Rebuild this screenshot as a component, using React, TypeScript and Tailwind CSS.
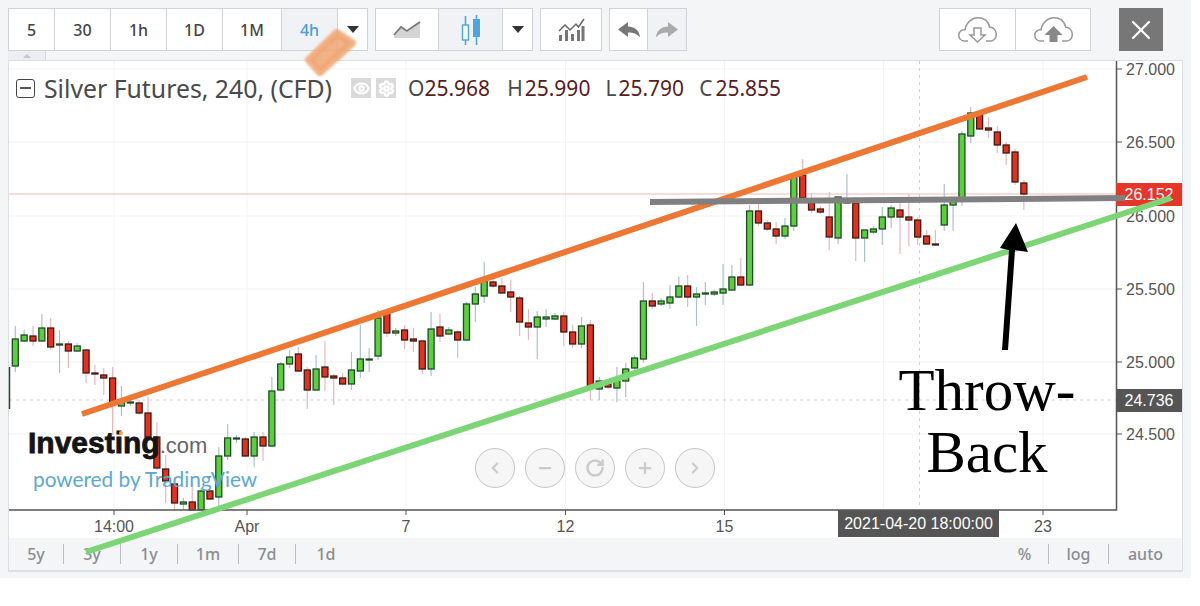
import React from "react";
import { ChevronLeft, ChevronRight, Minus, Plus, RotateCw, Eye, Settings, X } from "lucide-react";

type C = [number, number, number, number, "g" | "r"];
const candles: C[] = [
  [326, 339, 366, 372, "g"], [330, 335, 341, 342, "g"], [326, 336, 341, 346, "r"], [314, 328, 341, 342, "g"], [318, 328, 347, 350, "r"],
  [330, 344, 345, 373, "g"], [341, 344, 351, 368, "r"], [343, 346, 351, 352, "g"], [349, 350, 373, 383, "r"], [365, 373, 374, 385, "r"],
  [368, 375, 378, 395, "r"], [367, 378, 402, 435, "r"], [386, 402, 406, 416, "g"], [398, 402, 403, 406, "g"], [400, 403, 413, 415, "r"],
  [397, 413, 437, 440, "r"], [422, 437, 468, 470, "r"], [455, 469, 481, 503, "r"], [477, 484, 503, 510, "r"], [498, 502, 504, 510, "g"],
  [487, 502, 510, 510, "r"], [488, 491, 510, 510, "g"], [485, 491, 499, 500, "r"], [447, 456, 497, 508, "g"], [424, 438, 456, 460, "g"],
  [435, 438, 438, 443, "g"], [437, 439, 456, 457, "r"], [432, 437, 456, 467, "g"], [432, 437, 446, 461, "r"], [377, 391, 446, 447, "g"],
  [362, 364, 390, 391, "g"], [350, 357, 364, 368, "g"], [347, 354, 371, 372, "r"], [367, 370, 390, 409, "r"], [355, 369, 390, 391, "g"],
  [341, 367, 377, 391, "r"], [374, 376, 378, 405, "r"], [373, 378, 384, 385, "r"], [352, 370, 384, 390, "g"], [325, 359, 371, 378, "g"],
  [348, 359, 360, 372, "g"], [310, 318, 356, 360, "g"], [310, 313, 333, 337, "r"], [328, 331, 333, 336, "g"], [325, 330, 340, 349, "r"],
  [328, 339, 341, 352, "r"], [340, 341, 369, 374, "r"], [312, 329, 369, 376, "g"], [314, 327, 336, 342, "r"], [327, 330, 334, 335, "g"],
  [330, 332, 340, 358, "r"], [302, 304, 340, 341, "g"], [287, 294, 304, 322, "g"], [262, 281, 296, 303, "g"], [273, 282, 286, 288, "r"],
  [278, 286, 293, 294, "r"], [280, 292, 297, 312, "r"], [296, 298, 322, 336, "r"], [309, 323, 327, 340, "r"], [311, 317, 327, 359, "g"],
  [309, 317, 319, 327, "g"], [313, 316, 319, 320, "g"], [312, 316, 332, 346, "r"], [325, 332, 344, 348, "r"], [317, 326, 344, 348, "g"],
  [320, 325, 386, 400, "r"], [377, 381, 389, 400, "g"], [382, 384, 387, 389, "r"], [367, 378, 388, 402, "g"], [363, 369, 381, 397, "g"],
  [355, 358, 368, 370, "g"], [282, 301, 359, 363, "g"], [293, 301, 306, 309, "r"], [298, 301, 304, 306, "g"], [285, 297, 303, 309, "g"],
  [277, 286, 297, 298, "g"], [275, 286, 297, 307, "r"], [287, 294, 297, 326, "g"], [282, 293, 294, 305, "g"], [290, 292, 294, 296, "g"],
  [264, 289, 293, 305, "g"], [265, 277, 290, 291, "g"], [258, 277, 285, 286, "r"], [205, 211, 285, 286, "g"], [204, 211, 223, 226, "r"],
  [220, 223, 229, 231, "r"], [222, 229, 236, 244, "r"], [218, 226, 236, 239, "g"], [172, 175, 226, 231, "g"], [159, 175, 198, 203, "r"],
  [193, 203, 210, 213, "r"], [206, 209, 212, 214, "r"], [192, 217, 237, 250, "r"], [197, 197, 238, 244, "g"], [174, 200, 203, 204, "g"],
  [197, 203, 238, 261, "r"], [230, 230, 238, 262, "g"], [226, 229, 232, 234, "g"], [207, 217, 229, 245, "g"], [205, 208, 217, 228, "g"],
  [200, 210, 217, 254, "r"], [194, 217, 220, 246, "r"], [217, 220, 237, 245, "r"], [230, 236, 244, 245, "r"], [230, 244, 245, 246, "r"],
  [184, 205, 225, 231, "g"], [197, 201, 205, 231, "g"], [131, 134, 198, 206, "g"], [107, 113, 136, 143, "g"], [112, 115, 129, 130, "r"],
  [117, 128, 130, 138, "r"], [126, 132, 145, 153, "r"], [142, 145, 153, 165, "r"], [149, 152, 182, 185, "r"], [180, 183, 194, 210, "r"],
];

const prices = [
  ["27.000", 69], ["26.500", 142], ["26.000", 216], ["25.500", 289], ["25.000", 362], ["24.500", 434],
] as const;
const times = [["14:00", 114], ["Apr", 247], ["7", 406], ["12", 565.5], ["15", 724.5], ["23", 1043]] as const;
const gridX = [114, 247, 406, 565.5, 724.5, 883.5, 1043];

const Cell = ({ w, active, children }: { w: string; active?: boolean; children: React.ReactNode }) => (
  <div className={`${w} flex items-center justify-center border-r border-[#cfd3d8] last:border-r-0 ${active ? "bg-[#f0f2f5] text-[#4a9fd6]" : "bg-white text-[#444]"}`}>
    {children}
  </div>
);
const Group = ({ children }: { children: React.ReactNode }) => (
  <div className="flex h-full border border-[#cfd3d8]">{children}</div>
);
const Caret = () => <div className="w-0 h-0 border-x-[6px] border-x-transparent border-t-[7px] border-t-[#333]" />;

const Cloud = () => (
  <path d="M10 24H6.500C2.500 24 0.800 21 0.800 18C0.800 15 3.500 12.300 7 12.800C8 5.500 14 0.800 20 0.800C26.500 0.800 30.500 5 31.800 10.200C35.500 10 38.300 13.800 38.300 17.500C38.300 21.200 35.500 24 32.500 24H28" fill="none" stroke="#999" strokeWidth="1.5" />
);

export default function App() {
  return (
    <div className="w-[1200px] h-[606px] bg-white overflow-hidden font-['Noto_Sans',sans-serif]">
      <div className="relative w-[1191px] h-[578px] bg-[#f4f5f7] flex flex-col pt-2 pl-2 pr-2">
        {/* toolbar */}
        <div className="flex h-[43px] text-[16px] font-medium">
          <Group>
            <Cell w="w-[46px]">5</Cell>
            <Cell w="w-[56px]">30</Cell>
            <Cell w="w-[56px]">1h</Cell>
            <Cell w="w-[56px]">1D</Cell>
            <Cell w="w-[59px]">1M</Cell>
            <Cell w="w-[56px]" active>4h</Cell>
            <Cell w="w-[29px]"><Caret /></Cell>
          </Group>
          <div className="ml-[7px]">
            <Group>
              <Cell w="w-[63px]">
                <svg width="29" height="19" viewBox="0 0 29 19">
                  <path d="M1 16L8 8L14 12L21 7L27 2V18H1Z" fill="#d4d4d4" />
                  <path d="M1 15L8 7L14 11L21 6L27 2" fill="none" stroke="#777" strokeWidth="1.8" />
                </svg>
              </Cell>
              <Cell w="w-[64px]" active>
                <svg width="20" height="30" viewBox="0 0 20 30">
                  <path d="M4.500 1V30M15.500 0V30" stroke="#4da6e0" strokeWidth="1.6" />
                  <rect x="1.500" y="10" width="6" height="15" fill="#f5fafd" stroke="#4da6e0" strokeWidth="1.4" />
                  <rect x="12" y="4" width="7" height="18" fill="#4da6e0" />
                </svg>
              </Cell>
              <Cell w="w-[29px]"><Caret /></Cell>
            </Group>
          </div>
          <div className="ml-[7px]">
            <Group>
              <Cell w="w-[60px]">
                <svg width="27" height="24" viewBox="0 0 27 24">
                  <path d="M1 13L7 7L12 12L18 6L20.500 9L26 1" fill="none" stroke="#666" strokeWidth="1.5" />
                  <path d="M1 17h3v6H1zM7 12h3v11H7zM13 16h3v7h-3zM19 12h3v11h-3zM23.500 8h3v15h-3z" fill="#777" />
                </svg>
              </Cell>
            </Group>
          </div>
          <div className="ml-[7px]">
            <Group>
              <Cell w="w-[38px]">
                <svg width="22" height="16" viewBox="0 0 22 16">
                  <path d="M0 7.500L10 0V4.500C16 4.500 21.500 8 22 15.500C19 11.500 15 10.500 10 10.500V15Z" fill="#777" />
                </svg>
              </Cell>
              <Cell w="w-[38px]" active>
                <svg width="22" height="16" viewBox="0 0 22 16">
                  <path d="M22 7.500L12 0V4.500C6 4.500 0.500 8 0 15.500C3 11.500 7 10.500 12 10.500V15Z" fill="#aaa" />
                </svg>
              </Cell>
            </Group>
          </div>
          <div className="ml-auto mr-5 flex">
            <Group>
              <Cell w="w-[76px]">
                <svg width="39" height="26" viewBox="0 0 39 26">
                  <Cloud />
                  <path d="M16 11h7v7h4l-7.500 7-7.500-7h4z" fill="#fff" stroke="#999" strokeWidth="1.5" />
                </svg>
              </Cell>
              <Cell w="w-[74px]">
                <svg width="39" height="26" viewBox="0 0 39 26">
                  <Cloud />
                  <path d="M19.500 9l9 9h-5v7h-8v-7h-5z" fill="#888" />
                </svg>
              </Cell>
            </Group>
            <div className="ml-7 w-[44px] h-full bg-[#777] flex items-center justify-center">
              <X size={32} color="#fff" strokeWidth={1.6} />
            </div>
          </div>
        </div>
        {/* collapse strip */}
        <div className="h-[9px] flex">
          <div className="w-[38px] h-full bg-[#eceef1] border-r border-[#d6d9dd] flex items-center justify-center">
            <div className="w-0 h-0 border-x-[4px] border-x-transparent border-b-[4px] border-b-[#c4c7cb]" />
          </div>
        </div>
        {/* chart */}
        <div className="h-[478px] w-[1175px] bg-white border-t border-l border-r border-[#dcdfe4] relative" />
        {/* range bar */}
        <div className="h-[34px] w-[1175px] flex items-center border-l border-r border-b-2 border-[#dcdfe4] bg-[#f4f5f7] text-[16px] font-medium text-[#8a8d92]">
          <div className="w-[55px] text-center border-r border-[#b8bbc0] leading-5">5y</div>
          <div className="w-[57px] text-center border-r border-[#b8bbc0] leading-5">3y</div>
          <div className="w-[57px] text-center border-r border-[#b8bbc0] leading-5">1y</div>
          <div className="w-[61px] text-center border-r border-[#b8bbc0] leading-5">1m</div>
          <div className="w-[57px] text-center border-r border-[#b8bbc0] leading-5">7d</div>
          <div className="w-[60px] text-center leading-5">1d</div>
          <div className="ml-auto w-[48px] text-center border-r border-[#b8bbc0] leading-5">%</div>
          <div className="w-[60px] text-center border-r border-[#b8bbc0] leading-5">log</div>
          <div className="w-[73px] text-center leading-5">auto</div>
        </div>

        {/* chart drawing, in page coordinates */}
        <svg className="absolute left-0 top-0" width="1191" height="578" viewBox="0 0 1191 578">
          {prices.map(([, y]) => <line key={y} x1="9" x2="1116" y1={y} y2={y} stroke="#f2f3f4" />)}
          {gridX.map((x) => <line key={x} x1={x} x2={x} y1="61" y2="510" stroke="#f2f3f4" />)}
          <line x1="9" x2="1116" y1="194" y2="194" stroke="#efb9b5" />
          <line x1="9" x2="1116" y1="400" y2="400" stroke="#cfcfcf" strokeDasharray="3 4" />
          <line x1="919.500" x2="919.500" y1="61" y2="510" stroke="#cfcfcf" strokeDasharray="3 4" />
          <line x1="9.500" x2="9.500" y1="367" y2="409" stroke="#2c4a2c" strokeWidth="1.500" />
          {candles.map(([wt, bt, bb, wb, c], i) => {
            const x = 15.3 + i * 8.847;
            const g = c === "g";
            return (
              <g key={i}>
                <line x1={x} x2={x} y1={wt} y2={wb} stroke={g ? "#a9c1cc" : "#e9b7bd"} strokeWidth="1.200" />
                <rect x={x - 3} y={bt} width="6" height={Math.max(bb - bt, 1)} fill={g ? "#5ad03e" : "#e5301f"} stroke={g ? "#1f4a24" : "#3c1a12"} strokeWidth="1.300" />
              </g>
            );
          })}
          <rect x="9" y="511" width="1107" height="26" fill="#fff" />
          <path d="M9 510H1116.500V61" fill="none" stroke="#555" strokeWidth="1.500" />
          {prices.map(([, y]) => <line key={y} x1="1117" x2="1122" y1={y} y2={y} stroke="#555" />)}
          {times.map(([, x]) => <line key={x} x1={x} x2={x} y1="510" y2="515" stroke="#555" />)}
        </svg>

        {/* legend */}
        <div className="absolute left-[16px] top-[73px] flex items-center h-[30px] text-[#4a4a4a]">
          <div className="w-[19px] h-[19px] border border-[#444] rounded-[3px] flex items-center justify-center">
            <div className="w-[11px] h-[1.5px] bg-[#555]" />
          </div>
          <span className="ml-[9px] text-[24.800px] leading-[30px] whitespace-nowrap">Silver Futures, 240, (CFD)</span>
          <div className="ml-[19px] w-[20px] h-[20px] bg-[#d9d9d9] flex items-center justify-center"><Eye size={17} color="#fff" strokeWidth={3} /></div>
          <div className="ml-[5px] w-[20px] h-[20px] bg-[#d9d9d9] flex items-center justify-center"><Settings size={17} color="#fff" strokeWidth={3.5} /></div>
          <div className="ml-[12px] flex text-[21px] leading-[30px] whitespace-nowrap">
            <span>O</span><span className="text-[#5a1c1c]">25.968</span>
            <span className="ml-[17px]">H</span><span className="ml-[2px] text-[#5a1c1c]">25.990</span>
            <span className="ml-[15px]">L</span><span className="ml-[2px] text-[#5a1c1c]">25.790</span>
            <span className="ml-[15px]">C</span><span className="ml-[3px] text-[#5a1c1c]">25.855</span>
          </div>
        </div>

        {/* price axis */}
        {prices.map(([p, y]) => (
          <span key={p} className="absolute left-[1126px] -translate-y-1/2 text-[16px] leading-5 text-[#555] font-['Liberation_Sans',sans-serif]" style={{ top: y + 1 }}>{p}</span>
        ))}
        <div className="absolute left-[1116px] top-[183px] w-[66px] h-[23px] bg-[#e8352a] text-white text-[16px] leading-[23px] text-center font-['Liberation_Sans',sans-serif]">26.152</div>
        <div className="absolute left-[1116px] top-[389px] w-[66px] h-[23px] bg-[#555] text-white text-[16px] leading-[23px] text-center font-['Liberation_Sans',sans-serif]">24.736</div>

        {/* time axis */}
        {times.map(([t, x]) => (
          <span key={t} className="absolute top-[517px] -translate-x-1/2 text-[16px] leading-5 text-[#555] font-['Liberation_Sans',sans-serif]" style={{ left: x }}>{t}</span>
        ))}
        <div className="absolute left-[838px] top-[510px] w-[161px] h-[27px] bg-[#555] text-white text-[16px] leading-[27px] text-center font-['Liberation_Sans',sans-serif] whitespace-nowrap">2021-04-20 18:00:00</div>

        {/* watermark */}
        <div className="absolute left-[28px] top-[425px] flex items-baseline whitespace-nowrap font-['Liberation_Sans',sans-serif]">
          <span className="text-[30px] leading-[36px] font-bold text-[#151515] [-webkit-text-stroke:0.8px_#151515]">Investing</span>
          <span className="text-[22px] leading-[36px] text-[#666]">.com</span>
        </div>
        <div className="absolute left-[119px] top-[431px] w-[4px] h-[4px] rounded-full bg-[#f0a93a]" />
        <div className="absolute left-[33px] top-[465px] text-[20.800px] leading-[28px] whitespace-nowrap text-[#5ba8d9] font-['Lato',sans-serif]">powered by TradingView</div>

        {/* floating nav */}
        <div className="absolute left-[475px] top-[448px] flex gap-[10px]">
          {[ChevronLeft, Minus, RotateCw, Plus, ChevronRight].map((I, i) => (
            <div key={i} className="w-[40px] h-[40px] rounded-full bg-[#f6f6f6] border border-[#c6c6c6] flex items-center justify-center">
              <I size={i === 2 ? 20 : 18} color="#cbcbcb" strokeWidth={3} />
            </div>
          ))}
        </div>

        {/* hand annotations */}
        <svg className="absolute left-0 top-0 pointer-events-none" width="1200" height="606" viewBox="0 0 1200 606">
          <path className="blur-[1px]" d="M309 60L337 33L352 43L320 72Z" fill="#f0a673" fillOpacity="0.85" stroke="#f0a673" strokeOpacity="0.85" strokeWidth="8" strokeLinejoin="round" />
          <line x1="82" y1="414" x2="1087" y2="77" stroke="#ed7733" strokeWidth="6" />
          <line x1="86" y1="552" x2="1171" y2="198" stroke="#7dd676" strokeWidth="6" />
          <line x1="650" y1="202" x2="1125" y2="198" stroke="#808080" strokeWidth="6" />
          <path d="M1016 223L1028 252L1015 250L1008 350L1002 350L1009 250L1000 248Z" fill="#000" />
        </svg>
        <div className="absolute left-[887px] top-[359px] w-[200px] text-center text-[59px] leading-[62px] text-black font-['Liberation_Serif',serif]">
          Throw-<br />Back
        </div>
      </div>
    </div>
  );
}
